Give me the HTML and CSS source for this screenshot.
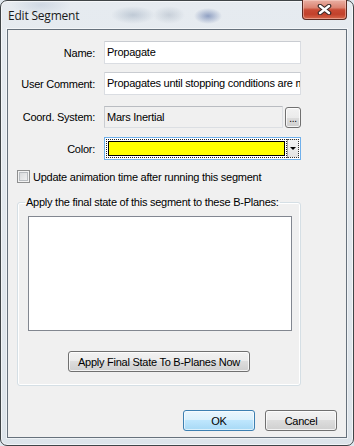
FILE: index.html
```html
<!DOCTYPE html>
<html lang="en">

<head>
    <meta http-equiv="Content-Type" content="text/html; charset=utf-8"/>
    <title>Edit Segment</title>
    <link rel="stylesheet" href="styles.css">
</head>

<body>

<div class="window">
    <div class="titlebar">
        <span class="title">Edit Segment</span>
        <div class="close">
            <svg width="15" height="11" viewBox="0 0 15 11">
                <path d="M3 2 L12 9 M12 2 L3 9" stroke="#3a2a28" stroke-width="4.6" stroke-linecap="round"/>
                <path d="M3 2 L12 9 M12 2 L3 9" stroke="#ffffff" stroke-width="2.4" stroke-linecap="round"/>
            </svg>
        </div>
    </div>

    <div class="client">
        <div class="row row-name">
            <label class="lbl">Name:</label>
            <div class="field textbox">Propagate</div>
        </div>
        <div class="row row-comment">
            <label class="lbl">User Comment:</label>
            <div class="field textbox">Propagates until stopping conditions are met</div>
        </div>
        <div class="row row-coord">
            <label class="lbl">Coord. System:</label>
            <div class="field readonly">Mars Inertial</div>
            <button class="btn browse">...</button>
        </div>
        <div class="row row-color">
            <label class="lbl">Color:</label>
            <div class="field combo">
                <div class="focus"><div class="swatch"></div></div>
                <div class="arrow"><span class="tri"></span></div>
            </div>
        </div>

        <div class="check">
            <span class="box"></span>
            <span>Update animation time after running this segment</span>
        </div>

        <fieldset class="group">
            <legend>Apply the final state of this segment to these B-Planes:</legend>
            <div class="group-body">
                <div class="listbox"></div>
                <button class="btn apply">Apply Final State To B-Planes Now</button>
            </div>
        </fieldset>

        <div class="footer">
            <button class="btn default">OK</button>
            <button class="btn">Cancel</button>
        </div>
    </div>
</div>

</body>

</html>
```

FILE: styles.css
```css
html, body {
    margin: 0;
    padding: 0;
}

body {
    font-family: "Liberation Sans", Arial, sans-serif;
    font-size: 11px;
    letter-spacing: -0.25px;
    color: #000;
    background: #dfe7ee;
}

.window {
    box-sizing: border-box;
    width: 354px;
    height: 446px;
    border: 1px solid #3f4447;
    border-radius: 7px;
    background:
        radial-gradient(ellipse 22px 9px at 132px 14px, rgba(120, 140, 165, .35), transparent),
        radial-gradient(ellipse 16px 9px at 168px 14px, rgba(130, 145, 165, .3), transparent),
        radial-gradient(ellipse 14px 8px at 207px 15px, rgba(40, 70, 140, .45), transparent),
        radial-gradient(ellipse 30px 10px at 40px 4px, rgba(140, 160, 190, .25), transparent),
        linear-gradient(#e6ebf0, #dde4ea);
    box-shadow: inset 0 0 0 1px rgba(255, 255, 255, .6);
}

.titlebar {
    height: 28px;
    display: flex;
    justify-content: space-between;
    align-items: flex-start;
}

.title {
    font-family: "Open Sans", "Noto Sans", sans-serif;
    font-size: 12px;
    letter-spacing: -0.2px;
    margin: 6px 0 0 7px;
    color: #1a1a1a;
}

.close {
    box-sizing: border-box;
    width: 45px;
    height: 20px;
    margin: -1px 6px 0 0;
    border: 1px solid #5a2a22;
    border-top: none;
    border-radius: 0 0 4px 4px;
    background: linear-gradient(#eab0a4 0%, #dc8472 40%, #c84a34 52%, #c2412b 75%, #d6684c 100%);
    box-shadow: inset 0 0 0 1px rgba(255, 220, 210, .45);
    display: flex;
    justify-content: center;
    align-items: center;
}

.client {
    box-sizing: border-box;
    height: 409px;
    margin: 0 6px;
    border: 1px solid #66717c;
    background: #f0f0f0;
    padding: 11px 0 0 0;
    box-shadow: 0 0 0 1px rgba(255, 255, 255, .5);
}

.row {
    display: flex;
    align-items: center;
    height: 23px;
}

.row-comment {
    margin-top: 8px;
}

.row-coord {
    margin-top: 11px;
    height: 22px;
}

.row-color {
    margin-top: 9px;
}

.lbl {
    width: 87px;
    margin-right: 9px;
    text-align: right;
    white-space: nowrap;
}

.field {
    box-sizing: border-box;
    width: 197px;
    height: 100%;
    white-space: nowrap;
    overflow: hidden;
}

.textbox {
    background: #fff;
    border: 1px solid #dadde2;
    border-top-color: #c9ccd1;
    border-radius: 1px;
    padding: 4px 0 0 2px;
}

.readonly {
    width: 179px;
    background: #f0f0f0;
    border: 1px solid #dcdfe3;
    border-top-color: #b9bcc1;
    border-left-color: #c9ccd0;
    padding: 4px 0 0 2px;
}

.combo {
    display: flex;
    border: 1px solid #6fb0ec;
    padding: 1px;
    background: #fff;
}

.focus {
    flex: 1;
    border: 1px dotted #222;
    padding: 1px;
}

.swatch {
    box-sizing: border-box;
    height: 100%;
    background: #ffff00;
    border: 1px solid #000;
}

.arrow {
    width: 12px;
    border-left: 1px solid #a9a9a9;
    border-top: 1px dotted #333;
    border-bottom: 1px dotted #333;
    border-right: 1px dotted #333;
    box-sizing: border-box;
    background: linear-gradient(#f4f4f4, #e2e2e2);
    display: flex;
    justify-content: center;
    align-items: center;
}

.tri {
    width: 0;
    height: 0;
    border-left: 3px solid transparent;
    border-right: 3px solid transparent;
    border-top: 3px solid #000;
}

.btn {
    box-sizing: border-box;
    font-family: "Liberation Sans", Arial, sans-serif;
    font-size: 11px;
    letter-spacing: -0.25px;
    color: #000;
    border: 1px solid #707070;
    border-radius: 3px;
    background: linear-gradient(#f2f2f2 0%, #ebebeb 50%, #dddddd 50%, #cfcfcf 100%);
    box-shadow: inset 0 0 0 1px rgba(255, 255, 255, .75);
    padding: 0;
}

.browse {
    width: 16px;
    height: 21px;
    margin-left: 2px;
    margin-top: 1px;
    line-height: 22px;
    font-size: 10px;
}

.check {
    display: flex;
    align-items: center;
    margin: 10px 0 0 9px;
    height: 13px;
}

.box {
    box-sizing: border-box;
    width: 13px;
    height: 13px;
    margin-right: 3px;
    border: 1px solid #8e8f8f;
    background: linear-gradient(135deg, #d2d4d6, #f7f7f7);
    box-shadow: inset 0 0 0 1px #f3f3f3, inset 0 0 0 2px #b8bcc0;
}

.group {
    box-sizing: border-box;
    width: 284px;
    height: 190px;
    margin: 13px 0 0 9px;
    padding: 0;
    border: 1px solid #d5dfe5;
    border-radius: 3px;
    box-shadow: inset 0 0 0 1px #fff;
}

.group legend {
    margin-left: 7px;
    padding: 0 1px;
    line-height: 13px;
}

.group-body {
    display: flex;
    flex-direction: column;
    align-items: center;
    padding-top: 7px;
}

.listbox {
    box-sizing: border-box;
    width: 264px;
    height: 115px;
    margin-left: 1px;
    background: #fff;
    border: 1px solid #828790;
}

.apply {
    width: 182px;
    height: 21px;
    margin-top: 20px;
}

.footer {
    display: flex;
    justify-content: flex-end;
    gap: 10px;
    margin: 24px 9px 0 0;
}

.footer .btn {
    width: 72px;
    height: 21px;
}

.default {
    border-color: #3c7fb1;
    background: linear-gradient(#eaf6fd 0%, #d9f0fc 50%, #bee6fd 50%, #a7d9f5 100%);
    box-shadow: inset 0 0 0 1px rgba(255, 255, 255, .6);
}
```
